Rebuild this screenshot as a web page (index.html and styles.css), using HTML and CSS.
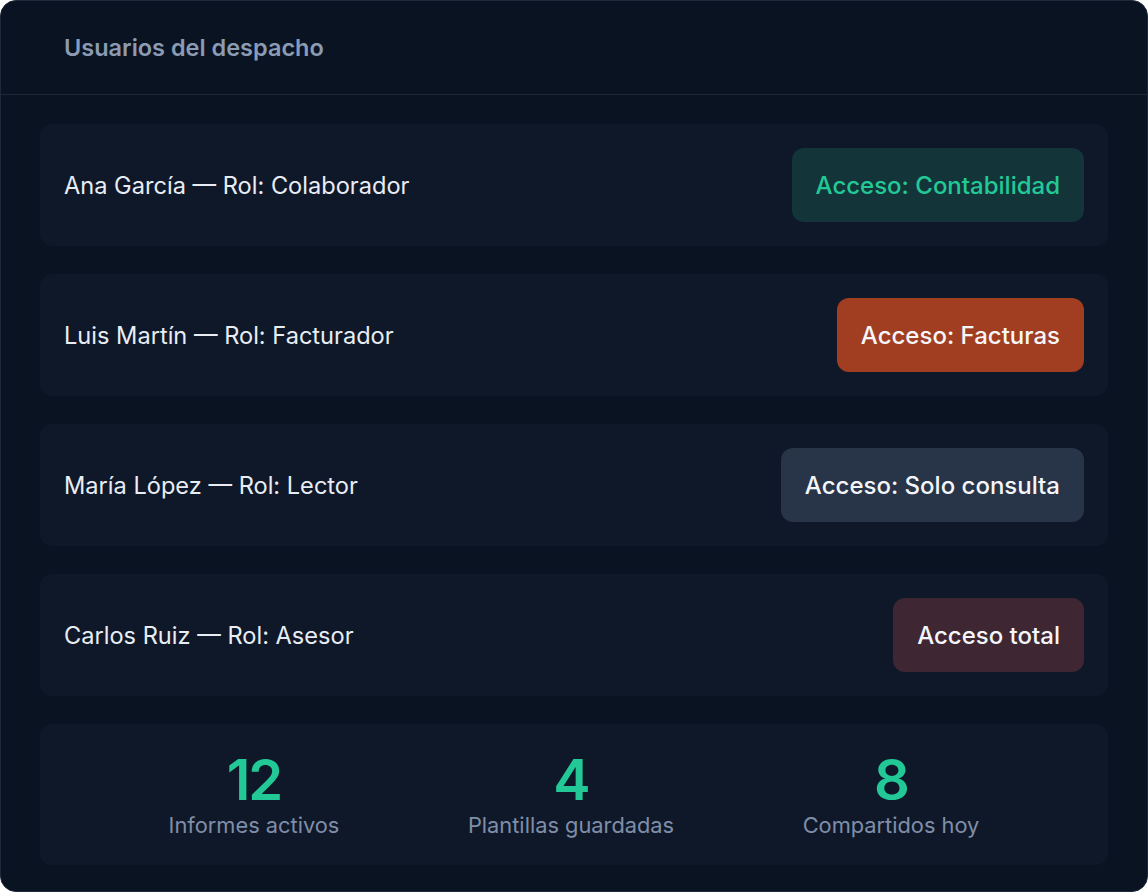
FILE: index.html
```html
<!DOCTYPE html>
<html lang="es">
<head>
<meta charset="utf-8">
<title>Usuarios del despacho</title>
<link rel="stylesheet" href="styles.css">
</head>
<body>
<div class="panel">
  <header class="panel-header">
    <h1 class="panel-title">Usuarios del despacho</h1>
  </header>
  <main class="panel-body">
    <div class="user-row">
      <span class="user-name">Ana García — Rol: Colaborador</span>
      <span class="badge badge-green">Acceso: Contabilidad</span>
    </div>
    <div class="user-row">
      <span class="user-name">Luis Martín — Rol: Facturador</span>
      <span class="badge badge-orange">Acceso: Facturas</span>
    </div>
    <div class="user-row">
      <span class="user-name">María López — Rol: Lector</span>
      <span class="badge badge-slate">Acceso: Solo consulta</span>
    </div>
    <div class="user-row">
      <span class="user-name">Carlos Ruiz — Rol: Asesor</span>
      <span class="badge badge-wine">Acceso total</span>
    </div>
    <div class="stats">
      <div class="stat">
        <div class="stat-value">12</div>
        <div class="stat-label">Informes activos</div>
      </div>
      <div class="stat">
        <div class="stat-value">4</div>
        <div class="stat-label">Plantillas guardadas</div>
      </div>
      <div class="stat">
        <div class="stat-value">8</div>
        <div class="stat-label">Compartidos hoy</div>
      </div>
    </div>
  </main>
</div>
</body>
</html>
```

FILE: styles.css
```css
* { box-sizing: border-box; }

html, body {
  margin: 0;
  padding: 0;
  background: #ffffff;
}

body {
  font-family: Inter, "Noto Sans", "Liberation Sans", sans-serif;
  width: 1148px;
  height: 892px;
}

.panel {
  width: 1148px;
  height: 892px;
  background: #0a1321;
  border: 1px solid #1e293b;
  border-radius: 16px;
  overflow: hidden;
  display: flex;
  flex-direction: column;
}

.panel-header {
  height: 94px;
  flex: none;
  display: flex;
  align-items: center;
  padding: 0 63px;
  border-bottom: 1px solid #1c2738;
}

.panel-title {
  margin: 0;
  font-size: 23.5px;
  font-weight: 600;
  color: #8b9bb4;
}

.panel-body {
  flex: 1;
  display: flex;
  flex-direction: column;
  gap: 28px;
  padding: 29px 39px 26px;
}

.user-row {
  height: 122px;
  flex: none;
  display: flex;
  align-items: center;
  justify-content: space-between;
  padding: 0 24px;
  background: #0f1829;
  border-radius: 12px;
}

.user-name {
  font-size: 23.6px;
  color: #e8edf4;
}

.badge {
  display: inline-flex;
  align-items: center;
  height: 74px;
  padding: 0 24px;
  border-radius: 12px;
  font-size: 24px;
  font-weight: 500;
  color: #f4f6fa;
}

.badge-green { background: #13353a; color: #22c997; }
.badge-orange { background: #a13e22; }
.badge-slate { background: #283447; }
.badge-wine { background: #3e2733; }

.stats {
  flex: 1;
  display: flex;
  justify-content: space-evenly;
  align-items: center;
  background: #0f1829;
  border-radius: 12px;
}

.stat {
  display: flex;
  flex-direction: column;
  align-items: center;
}

.stat-value {
  font-size: 56px;
  line-height: 60px;
  font-weight: 600;
  color: #22c997;
  letter-spacing: -2px;
}

.stat-label {
  font-size: 21.8px;
  line-height: 30px;
  color: #7f8ea8;
}
```
